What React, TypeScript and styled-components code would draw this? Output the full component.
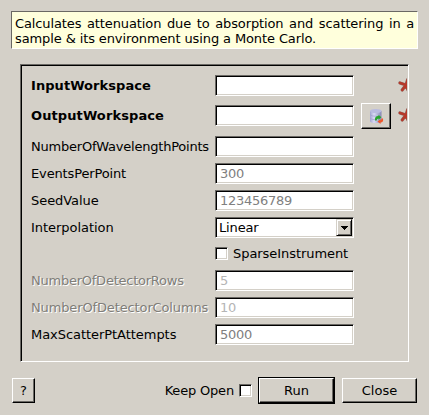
import React from 'react';
import styled, { createGlobalStyle, css } from 'styled-components';

const face = '#d4d0c8';
const shadow = '#6a6864';

const GlobalStyle = createGlobalStyle`
  * { box-sizing: border-box; }
  body {
    margin: 0;
    overflow: hidden;
    background: ${face};
    color: #000;
    font: 13px/15px "DejaVu Sans", sans-serif;
  }
`;

const sunken = css`
  border: 1px solid;
  border-color: ${shadow} #fff #fff ${shadow};
  box-shadow: inset 1px 1px #000, inset -1px -1px ${face};
`;

const Dialog = styled.main`
  width: 429px;
  height: 415px;
  padding: 11px 11px 0;
  display: flex;
  flex-direction: column;
`;

const Summary = styled.p`
  margin: 0;
  width: 407px;
  height: 38px;
  padding: 4px 3px 0;
  background: #ffffdc;
  border: 1px solid;
  border-color: ${shadow} #fff #fff ${shadow};
  text-align: justify;
  letter-spacing: -0.11px;
`;

const Panel = styled.section`
  width: 389px;
  height: 298px;
  margin: 15px 0 0 9px;
  padding: 10px 0 0 10px;
  border: 1px solid;
  border-color: ${shadow} #fff #fff ${shadow};
  box-shadow: inset 1px 1px #000;
  display: flex;
  flex-direction: column;
  gap: 6px;
  overflow: hidden;
`;

const Row = styled.div<{ $height?: number }>`
  height: ${p => p.$height ?? 21}px;
  flex: none;
  display: grid;
  grid-template-columns: 184px 139px 37px 16px;
  align-items: start;
`;

const Label = styled.label<{ $bold?: boolean; $disabled?: boolean; $tracking?: number }>`
  line-height: 21px;
  white-space: nowrap;
  letter-spacing: ${p => p.$tracking ?? 0}px;
  font-weight: ${p => (p.$bold ? 700 : 400)};
  ${p => p.$disabled && css`color: #807e79; text-shadow: 1px 1px #fff;`}
`;

const Field = styled.input`
  ${sunken}
  width: 139px;
  height: 21px;
  padding: 0 4px;
  border-radius: 0;
  outline: 0;
  background: #fff;
  font: inherit;
  letter-spacing: -0.27px;
  &::placeholder { color: #808080; opacity: 1; }
  &:disabled::placeholder { color: #b5b5b5; }
`;

const Combo = styled.div`
  ${sunken}
  height: 21px;
  padding: 1px 1px 1px 3px;
  background: #fff;
  display: flex;
  justify-content: space-between;
  line-height: 18px;
  letter-spacing: -0.15px;
`;

const ComboArrow = styled.span`
  width: 16px;
  height: 17px;
  background: ${face};
  border: 1px solid;
  border-color: ${face} #000 #000 ${face};
  box-shadow: inset 1px 1px #fff, inset -1px -1px ${shadow};
  display: grid;
  place-items: center;
`;

const Check = styled.input`
  ${sunken}
  appearance: none;
  width: 13px;
  height: 13px;
  margin: 0;
  flex: none;
  background: #fff;
`;

const CheckRow = styled.label`
  grid-column: 2 / 5;
  display: flex;
  align-items: center;
  gap: 5px;
  line-height: 19px;
  white-space: nowrap;
  letter-spacing: -0.06px;
`;

const Button = styled.button<{ $w: number; $h?: number }>`
  width: ${p => p.$w}px;
  height: ${p => p.$h ?? 25}px;
  flex: none;
  padding: 0;
  background: ${face};
  color: #000;
  border: 1px solid;
  border-color: #fff #000 #000 #fff;
  border-radius: 0;
  box-shadow: inset -1px -1px ${shadow};
  font: inherit;
  display: flex;
  align-items: center;
  justify-content: center;
`;

const DefaultFrame = styled.div`
  border: 1px solid #000;
  margin-right: 7px;
`;

const Footer = styled.footer`
  display: flex;
  align-items: center;
  width: 405px;
  height: 27px;
  margin: 15px 0 0 1px;
`;

const KeepOpen = styled.label`
  display: flex;
  align-items: center;
  gap: 5px;
  margin: 0 6px 0 auto;
  letter-spacing: -0.18px;
`;

const IconCell = styled.span`
  grid-column: 4;
  margin: 2px 0 0 7px;
  width: 9px;
  height: 16px;
  overflow: hidden;
`;

const Tool = styled(Button)`
  margin: -2px 0 0 7px;
`;

const starArms = 'M8 8 9.700 2.600 M8 8 1.900 5.900 M8 8 4.200 13 M8 8 10 13 M8 8 14 7';

const Star = () => (
  <IconCell>
    <svg width="16" height="16" viewBox="0 0 16 16" display="block">
      <path d={starArms} stroke="#94635a" strokeWidth="3.2" strokeLinecap="round" fill="none" />
      <path d={starArms} stroke="#b8382a" strokeWidth="2.2" strokeLinecap="round" fill="none" />
    </svg>
  </IconCell>
);

const Database = () => (
  <svg width="16" height="16" viewBox="0 0 16 16">
    <defs>
      <linearGradient id="drum">
        <stop offset="0" stopColor="#a2a3d0" />
        <stop offset=".35" stopColor="#d9dbf6" />
        <stop offset="1" stopColor="#8586b3" />
      </linearGradient>
    </defs>
    <path d="M2 3v10q0 2 6 2t5.500-2V3z" fill="url(#drum)" />
    <ellipse cx="7.800" cy="3" rx="5.800" ry="2" fill="#b9bbe0" />
    <path d="M2 6.500q1 1.800 6 1.800M2 10q1 1.800 6 1.800" stroke="#a0a1cc" strokeWidth=".7" fill="none" />
    <path d="M7 12.500Q6.500 7.800 10.500 8V6.800L13.400 9.300 10.500 11.800V10.500Q8.700 10.500 8.700 12.500z" fill="#28a52e" />
    <path d="M15 10.500Q15.800 14.500 12.500 14.500V15.900L9.500 13.400 12.500 11.200V12.400Q13.500 12.300 13.500 10.500z" fill="#f0562a" />
  </svg>
);

interface Prop {
  name: string;
  hint?: string;
  disabled?: boolean;
  tracking?: number;
}

const numeric: Prop[] = [
  { name: 'NumberOfWavelengthPoints', tracking: -0.22 },
  { name: 'EventsPerPoint', hint: '300', tracking: -0.14 },
  { name: 'SeedValue', hint: '123456789', tracking: -0.06 },
];

const detector: Prop[] = [
  { name: 'NumberOfDetectorRows', hint: '5', disabled: true, tracking: -0.24 },
  { name: 'NumberOfDetectorColumns', hint: '10', disabled: true, tracking: -0.13 },
  { name: 'MaxScatterPtAttempts', hint: '5000', tracking: -0.05 },
];

const PropertyRow = ({ name, hint, disabled, tracking }: Prop) => (
  <Row>
    <Label $disabled={disabled} $tracking={tracking}>{name}</Label>
    <Field placeholder={hint} disabled={disabled} />
  </Row>
);

export default function App() {
  return (
    <>
      <GlobalStyle />
      <Dialog>
        <Summary>
          Calculates attenuation due to absorption and scattering in a sample &amp; its environment using a Monte Carlo.
        </Summary>
        <Panel>
          <Row $height={24}>
            <Label $bold $tracking={0.06}>InputWorkspace</Label>
            <Field />
            <Star />
          </Row>
          <Row $height={25}>
            <Label $bold $tracking={0.1}>OutputWorkspace</Label>
            <Field />
            <Tool $w={30} $h={26}><Database /></Tool>
            <Star />
          </Row>
          {numeric.map(p => <PropertyRow key={p.name} {...p} />)}
          <Row>
            <Label $tracking={-0.04}>Interpolation</Label>
            <Combo>
              Linear
              <ComboArrow>
                <svg width="7" height="4" viewBox="0 0 7 4" shapeRendering="crispEdges">
                  <path d="M0 0h7v1H6v1H5v1H4v1H3V3H2V2H1V1H0z" />
                </svg>
              </ComboArrow>
            </Combo>
          </Row>
          <Row $height={20}>
            <CheckRow><Check type="checkbox" />SparseInstrument</CheckRow>
          </Row>
          {detector.map(p => <PropertyRow key={p.name} {...p} />)}
        </Panel>
        <Footer>
          <Button $w={23}>?</Button>
          <KeepOpen>Keep Open<Check type="checkbox" /></KeepOpen>
          <DefaultFrame><Button $w={75}>Run</Button></DefaultFrame>
          <Button $w={75}>Close</Button>
        </Footer>
      </Dialog>
    </>
  );
}
